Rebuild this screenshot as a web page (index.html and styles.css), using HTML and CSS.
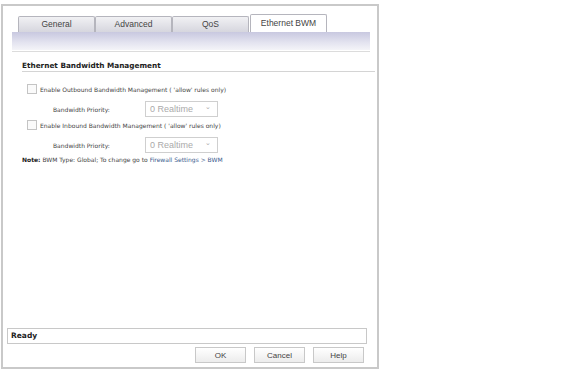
FILE: index.html
```html
<!DOCTYPE html>
<html lang="en">
<head>
    <meta charset="UTF-8">
    <title>Ethernet BWM</title>
    <link rel="stylesheet" href="styles.css">
</head>
<body>
    <div class="window">
        <div class="tabs">
            <div class="tab">General</div>
            <div class="tab">Advanced</div>
            <div class="tab">QoS</div>
            <div class="tab active">Ethernet BWM</div>
        </div>
        <div class="tab-bar"></div>
        <div class="tab-rule"></div>

        <div class="content">
            <h3 class="section-title">Ethernet Bandwidth Management</h3>

            <label class="check-row">
                <span class="checkbox"></span>
                Enable Outbound Bandwidth Management ( 'allow' rules only)
            </label>
            <div class="field-row">
                <span class="field-label">Bandwidth Priority:</span>
                <span class="select">0 Realtime <span class="arrow">&#8964;</span></span>
            </div>

            <label class="check-row">
                <span class="checkbox"></span>
                Enable Inbound Bandwidth Management ( 'allow' rules only)
            </label>
            <div class="field-row">
                <span class="field-label">Bandwidth Priority:</span>
                <span class="select">0 Realtime <span class="arrow">&#8964;</span></span>
            </div>

            <p class="note"><b>Note:</b> BWM Type: Global; To change go to <a href="#">Firewall Settings &gt; BWM</a></p>
        </div>

        <div class="status">Ready</div>
        <div class="buttons">
            <button>OK</button>
            <button>Cancel</button>
            <button>Help</button>
        </div>
    </div>
</body>
</html>
```

FILE: styles.css
```css
*{
    padding: 0;
    margin: 0;
    box-sizing: border-box;
}
body{
    background: #fff;
    font-family: "DejaVu Sans", Verdana, sans-serif;
    font-size: 6px;
    color: #444;
}
.window{
    margin: 4px 0 0 1px;
    width: 378px;
    height: 365px;
    border: 2px solid #c9c9c9;
    display: flex;
    flex-direction: column;
    padding: 0 4px 0 4px;
}
.tabs{
    display: flex;
    align-items: flex-end;
    height: 26px;
    padding-left: 11px;
}
.tab{
    width: 77px;
    height: 16px;
    border: 1px solid #b5b5bd;
    border-bottom: none;
    border-radius: 2px 2px 0 0;
    background: linear-gradient(#f1f1f4, #d6d6de);
    font-family: "Liberation Sans", Arial, sans-serif;
    font-size: 8.5px;
    color: #444;
    text-align: center;
    line-height: 15px;
}
.tab.active{
    height: 18px;
    background: #fff;
    line-height: 17px;
    margin-left: 1px;
}
.tab-bar{
    height: 18px;
    margin: 0 3px 0 5px;
    background: linear-gradient(#c8c8e0, #e4e4f0 60%, #f4f4f8);
}
.tab-rule{
    height: 1px;
    margin: 1px 3px 0 5px;
    background: #dcdcdc;
}
.content{
    flex: 1;
    padding: 9px 0 0 15px;
}
.section-title{
    font-size: 7.3px;
    font-weight: bold;
    line-height: 9px;
    color: #222;
    border-bottom: 1px solid #d4d4d4;
    padding-bottom: 1px;
    margin: 0 -2px 11px 0;
}
.check-row{
    display: flex;
    align-items: center;
    gap: 3px;
    height: 12px;
    margin-left: 5px;
}
.checkbox{
    width: 10px;
    height: 10px;
    border: 1px solid #c4c4c4;
    background: #fafafa;
}
.field-row{
    display: flex;
    align-items: center;
    height: 16px;
    margin: 6px 0 2px 31px;
}
.field-label{
    width: 92px;
}
.select{
    width: 73px;
    height: 16px;
    border: 1px solid #cfcfcf;
    color: #aaa;
    font-family: "Liberation Sans", Arial, sans-serif;
    font-size: 9px;
    padding-left: 4px;
    line-height: 14px;
    position: relative;
}
.arrow{
    position: absolute;
    right: 6px;
    top: -2px;
    font-size: 7px;
    color: #aaa;
}
.note{
    margin-top: 3px;
}
.note b{
    color: #222;
}
.note a{
    color: #3a5a8c;
    text-decoration: none;
}
.status{
    height: 16px;
    border: 1px solid #c8c8c8;
    font-weight: bold;
    font-size: 7.5px;
    color: #222;
    padding-left: 3px;
    line-height: 14px;
    margin-right: 6px;
}
.buttons{
    display: flex;
    justify-content: flex-end;
    gap: 8px;
    height: 23px;
    padding: 3px 9px 0 0;
}
button{
    width: 51px;
    height: 16px;
    border: 1px solid #c8c8c8;
    background: linear-gradient(#fff, #ececec);
    font-family: "Liberation Sans", Arial, sans-serif;
    font-size: 8px;
    color: #444;
}
```
